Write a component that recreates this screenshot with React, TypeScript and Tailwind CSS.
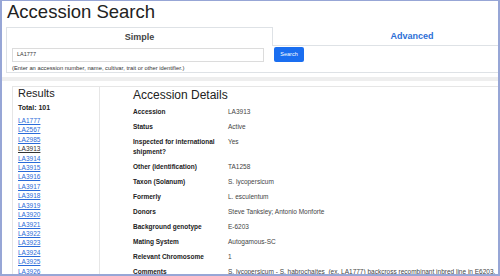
import React from "react";

const links = [
  "LA1777","LA2567","LA2985","LA3913","LA3914","LA3915","LA3916","LA3917","LA3918",
  "LA3919","LA3920","LA3921","LA3922","LA3923","LA3924","LA3925","LA3926",
];

const rows: [string, string][] = [
  ["Accession", "LA3913"],
  ["Status", "Active"],
  ["Inspected for international shipment?", "Yes"],
  ["Other (identification)", "TA1258"],
  ["Taxon (Solanum)", "S. lycopersicum"],
  ["Formerly", "L. esculentum"],
  ["Donors", "Steve Tanksley; Antonio Monforte"],
  ["Background genotype", "E-6203"],
  ["Mating System", "Autogamous-SC"],
  ["Relevant Chromosome", "1"],
  ["Comments", "S. lycopersicum - S. habrochaites\u00a0\u00a0(ex. LA1777) backcross recombinant inbred line in E6203."],
];

export default function App() {
  return (
    <div className="w-[500px] h-[276px] overflow-hidden bg-white border-l-2 border-r-2 border-t border-b-2 border-[#97a6d6] font-['Liberation_Sans',Arial,sans-serif] text-[#222]">
      <div className="pl-[5px] h-[22px] leading-[22px] text-[18.5px] text-[#222] whitespace-nowrap">
        Accession Search
      </div>
      <div className="ml-[4px] mt-[4px] w-[600px] border-l border-b border-[#dee2e6]">
        <div className="flex h-[19px]">
          <div className="w-[266px] border-t border-r border-[#dee2e6] flex items-center justify-center text-[9px] font-bold text-[#444] leading-none">
            Simple
          </div>
          <div className="w-[278px] border-b border-[#dee2e6] flex items-center justify-center text-[9px] font-bold text-[#2d6fd6] leading-none">
            Advanced
          </div>
        </div>
        <div className="pl-[5px] pt-[1px]">
          <div className="flex items-center">
            <div className="w-[252px] h-[14px] border border-[#dcdcdc] flex items-center pl-[4px] text-[5.5px] text-[#333]">
              LA1777
            </div>
            <div className="ml-[10px] w-[30px] h-[15px] rounded-[2px] bg-[#1a6ef0] text-white text-[5.5px] flex items-center justify-center">
              Search
            </div>
          </div>
          <div className="mt-[2.4px] text-[5.8px] leading-[8px] text-[#333] whitespace-nowrap">
            (Enter an accession number, name, cultivar, trait or other identifier.)
          </div>
        </div>
      </div>
      <div className="mt-[3.5px] h-[4px] bg-[#eeeeee]" />
      <div className="ml-[10px] mt-[5px] flex border-l border-t border-[#e6e6e6]">
        <div className="w-[87px] border-r border-[#e6e6e6] pl-[5px] pt-[0.5px] shrink-0">
          <div className="text-[11px] leading-[13px] text-[#222]">Results</div>
          <div className="mt-[2.8px] text-[7px] leading-[10px] font-bold text-[#222]">Total: 101</div>
          <div className="mt-[2.6px] flex flex-col">
            {links.map((l) => (
              <a
                key={l}
                className={
                  "text-[6.5px] leading-[9.44px] underline " +
                  (l === "LA3913" ? "text-[#333]" : "text-[#2a6ad8]")
                }
              >
                {l}
              </a>
            ))}
          </div>
        </div>
        <div className="flex-1 pl-[33px] pt-[1px]">
          <div className="text-[12px] leading-[14px] text-[#222] whitespace-nowrap">Accession Details</div>
          <div className="mt-[2.8px] flex flex-col">
            {rows.map(([k, v]) => (
              <div key={k} className="flex py-[2.5px]">
                <div className="w-[95px] pr-[4px] shrink-0 text-[6.5px] leading-[10px] font-bold text-[#222]">
                  {k}
                </div>
                <div className="text-[6.5px] leading-[10px] text-[#444] whitespace-nowrap">{v}</div>
              </div>
            ))}
          </div>
        </div>
      </div>
    </div>
  );
}
